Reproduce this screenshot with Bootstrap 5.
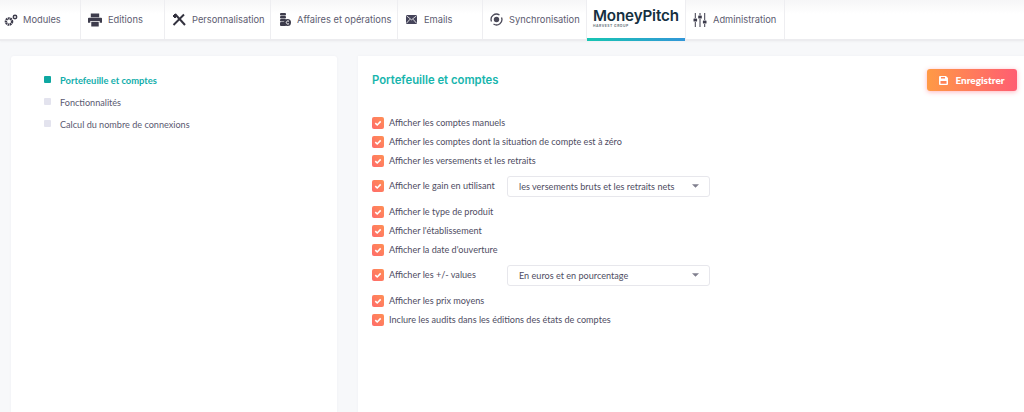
<!DOCTYPE html>
<html lang="fr"><head><meta charset="utf-8"><title>Portefeuille et comptes</title>
<link href="https://cdn.jsdelivr.net/npm/bootstrap@5.3.0/dist/css/bootstrap.min.css" rel="stylesheet">
<style>
html,body{height:412px;overflow:hidden}
body{background:#f7f8fa;font-family:Lato,sans-serif;color:#4f4d63}
.topbar{display:grid;grid-template-columns:81px 84px 106px 127px 85px 104px 99px 99px;height:41px;background:linear-gradient(#f6f6f7,#fff 14px);border-bottom:2px solid #ececef;box-shadow:0 1px 2px rgba(0,0,0,.03)}
.tabitem{display:flex;align-items:center;border-right:1px solid #eeeef1;font:400 9.3px Inter,sans-serif;color:#5d5c70;white-space:nowrap;height:39px;padding-left:4px;gap:5px}
.tabitem svg{flex:none}
.tab-logo{position:relative;flex-direction:column;align-items:flex-start;padding:8px 0 0 6px;gap:0;background:#fff}
.tab-logo::after{content:"";position:absolute;left:0;right:0;bottom:-2px;height:3px;background:linear-gradient(90deg,#17c5b2,#3296d8)}
.logo-word{font:600 15.2px/16px Inter,sans-serif;color:#14303f;letter-spacing:-.15px}
.logo-sub{font:700 3.4px/5px Inter,sans-serif;letter-spacing:.5px;color:#6b7780}
.pagewrap{display:flex;gap:21px;padding:15px 0 0 11px;height:371px}
.sidecard{width:326px;background:#fff;border-radius:3px 3px 0 0;padding:13px 0 0 33px;box-shadow:0 0 3px rgba(50,50,90,.04)}
.sideitem{display:flex;align-items:center;gap:9px;height:22px;font:400 9.1px Lato,sans-serif;color:#5a5970}
.sideitem i{width:7px;height:7px;border-radius:1px;background:#e3e3ee;margin-top:-1px}
.sideitem.on{color:#13aeab;font-weight:700;font-size:9.4px}
.sideitem.on i{background:#0ea7a1}
.maincard{flex:1;background:#fff;padding:13px 7px 0 14px;box-shadow:0 0 3px rgba(50,50,90,.04)}
.mainhead{display:flex;justify-content:space-between;height:44px}
.maintitle{font:600 11.3px/22px Inter,sans-serif;color:#17b5ad;margin:0}
.savebtn{display:flex;align-items:center;justify-content:center;gap:7px;width:90px;height:22px;border:0;border-radius:3px;padding:0;background:linear-gradient(90deg,#ff9a45,#ff5d72);box-shadow:0 1px 5px rgba(255,90,110,.45);color:#fff;font:900 10px Lato,sans-serif}
.optrow{display:flex;align-items:center;height:19px;font-size:9.1px;color:#4f4d63}
.optrow.tall{height:32px;margin:0}
.optrow .form-check-input{width:12px;height:12px;margin:0 5px 0 0;flex:none;border:0;border-radius:2px;background-color:transparent;background-image:url("data:image/svg+xml,%3Csvg xmlns='http://www.w3.org/2000/svg' viewBox='0 0 12 12'%3E%3Cpath d='M3.300 6.200l1.900 1.800 3.500-3.600' fill='none' stroke='%23fff' stroke-width='1.600'/%3E%3C/svg%3E"),linear-gradient(45deg,#ff6a6a,#ff8f55);background-size:100% 100%;box-shadow:none}
.optlabel{width:118px;flex:none}
.optselect{width:203px;height:21px;font:400 9.1px Lato,sans-serif;color:#4f4d63;padding:0 0 0 11px;border:1px solid #e7e7ec;border-radius:3px;background-image:url("data:image/svg+xml,%3Csvg xmlns='http://www.w3.org/2000/svg' viewBox='0 0 8 4'%3E%3Cpath d='M0 0h8L4 4z' fill='%23807f8e'/%3E%3C/svg%3E");background-size:7px 4px;background-position:right 10px center;box-shadow:none}
</style></head>
<body>
<nav class="topbar">
<div class="tabitem"><svg width="14" height="14" viewBox="0 0 14 14" fill="#3d3c4c"><circle cx="5" cy="8.500" r="3.100" fill="none" stroke="#3d3c4c" stroke-width="2.400" stroke-dasharray="1.700 .5"/><circle cx="11" cy="4" r="1.700" fill="none" stroke="#3d3c4c" stroke-width="1.500"/></svg>Modules</div>
<div class="tabitem" style="padding-left:7px;gap:6px"><svg width="14" height="14" viewBox="0 0 15 14" fill="#3d3c4c"><path d="M3 0h9v4H3zM1 4.500h13a1 1 0 0 1 1 1V10h-2.500V8h-10v2H0V5.500a1 1 0 0 1 1-1zM3.500 9h8v5h-8z"/></svg>Editions</div>
<div class="tabitem" style="padding-left:7px;gap:6px"><svg width="14" height="14" viewBox="0 0 14 14" fill="none" stroke="#33323f"><path d="M3 1l10 11" stroke-width="2"/><path d="M12 1.500L1.500 12" stroke-width="2"/><path d="M1 3l2-2 2 2-2 2z" fill="#33323f"/></svg>Personnalisation</div>
<div class="tabitem" style="padding-left:8px;gap:6px"><svg width="12" height="14" viewBox="0 0 12 14" fill="#3d3c4c"><rect x="1" y="0" width="6" height="2.500" rx="1"/><rect x="1" y="3" width="6" height="2.500" rx="1"/><rect x="1" y="6" width="6" height="2.500" rx="1"/><rect x="1" y="9" width="6" height="4" rx="1"/><circle cx="8.500" cy="9.500" r="3.500"/><path d="M10 8.300a1.600 1.600 0 1 0 0 2.400" fill="none" stroke="#fff"/></svg>Affaires et opérations</div>
<div class="tabitem" style="padding-left:8px;gap:7px"><svg width="11" height="9" viewBox="0 0 11 9" fill="#45445a"><rect width="11" height="9" rx="1"/><path d="M.5 .8l5 4 5-4M.5 8.200l3.500-4M10.500 8.200L7 4.200" fill="none" stroke="#fff" stroke-width=".8"/></svg>Emails</div>
<div class="tabitem" style="padding-left:7px;gap:6px"><svg width="13" height="13" viewBox="0 0 13 13" fill="none" stroke="#4a4958"><circle cx="6.500" cy="6.500" r="2.700" fill="#4a4958" stroke="none"/><path d="M1.500 8.500a5.400 5.400 0 0 1 8-6.500M11.500 4.500a5.400 5.400 0 0 1-8 6.500" stroke-width="1.300"/></svg>Synchronisation</div>
<div class="tabitem tab-logo"><span class="logo-word">MoneyPitch</span><span class="logo-sub">HARVEST GROUP</span></div>
<div class="tabitem" style="padding-left:7px;gap:6px"><svg width="14" height="14" viewBox="0 0 14 14" fill="#3d3c4c"><path d="M1.800 0h1v5h-1zM1.800 9h1v5h-1zM6.500 0h1v2h-1zM6.500 6h1v8h-1zM11.200 0h1v7h-1zM11.200 11h1v3h-1z"/><rect x=".5" y="5.500" width="3.600" height="3" rx=".6"/><rect x="5.200" y="2.500" width="3.600" height="3" rx=".6"/><rect x="9.900" y="7.500" width="3.600" height="3" rx=".6"/></svg>Administration</div>
</nav>
<div class="pagewrap">
<aside class="sidecard">
<div class="sideitem on"><i></i>Portefeuille et comptes</div>
<div class="sideitem"><i></i>Fonctionnalités</div>
<div class="sideitem"><i></i>Calcul du nombre de connexions</div>
</aside>
<main class="maincard">
<div class="mainhead"><h1 class="maintitle">Portefeuille et comptes</h1>
<button class="savebtn" type="button"><svg width="9" height="9" viewBox="0 0 9 9"><path d="M1 0h6l2 2v6a1 1 0 0 1-1 1H1a1 1 0 0 1-1-1V1a1 1 0 0 1 1-1z" fill="#fff"/><path d="M2 1h4v1.500H2zM1.500 5h6v2.800h-6z" fill="#ff8355"/></svg>Enregistrer</button></div>
<div>
<div class="optrow"><input class="form-check-input" type="checkbox" checked aria-label="a"><span>Afficher les comptes manuels</span></div>
<div class="optrow"><input class="form-check-input" type="checkbox" checked aria-label="b"><span>Afficher les comptes dont la situation de compte est à zéro</span></div>
<div class="optrow"><input class="form-check-input" type="checkbox" checked aria-label="c"><span>Afficher les versements et les retraits</span></div>
<div class="optrow tall"><input class="form-check-input" type="checkbox" checked aria-label="d"><span class="optlabel">Afficher le gain en utilisant</span><select class="form-select optselect" aria-label="gain"><option>les versements bruts et les retraits nets</option></select></div>
<div class="optrow"><input class="form-check-input" type="checkbox" checked aria-label="e"><span>Afficher le type de produit</span></div>
<div class="optrow"><input class="form-check-input" type="checkbox" checked aria-label="f"><span>Afficher l'établissement</span></div>
<div class="optrow"><input class="form-check-input" type="checkbox" checked aria-label="g"><span>Afficher la date d'ouverture</span></div>
<div class="optrow tall"><input class="form-check-input" type="checkbox" checked aria-label="h"><span class="optlabel">Afficher les +/- values</span><select class="form-select optselect" aria-label="values"><option>En euros et en pourcentage</option></select></div>
<div class="optrow"><input class="form-check-input" type="checkbox" checked aria-label="i"><span>Afficher les prix moyens</span></div>
<div class="optrow"><input class="form-check-input" type="checkbox" checked aria-label="j"><span>Inclure les audits dans les éditions des états de comptes</span></div>
</div>
</main>
</div>
<script src="https://cdn.jsdelivr.net/npm/bootstrap@5.3.0/dist/js/bootstrap.bundle.min.js"></script>
</body></html>
